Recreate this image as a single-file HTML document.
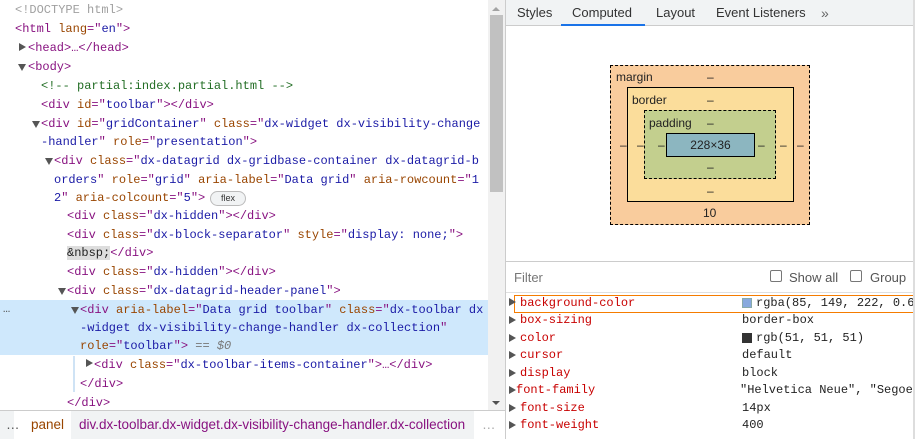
<!DOCTYPE html>
<html><head><style>
*{margin:0;padding:0;box-sizing:border-box}
body{width:915px;height:439px;overflow:hidden;background:#fff;position:relative;font-family:"Liberation Sans",sans-serif}
.mono{font-family:"Liberation Mono",monospace;font-size:12px}
.l{position:absolute;white-space:pre;line-height:19px;height:19px}
.t{color:#881280}.a{color:#994500}.v{color:#1a1aa6}.c{color:#236e25}.g{color:#a0a0a0}
.tri{position:absolute;width:0;height:0;border-left:4px solid transparent;border-right:4px solid transparent;border-top:7px solid #555}
.trr{position:absolute;width:0;height:0;border-top:4px solid transparent;border-bottom:4px solid transparent;border-left:7px solid #555}
.tab{position:absolute;top:0;height:26px;line-height:26px;font-size:13px;color:#333}
.prop{position:absolute;left:520px;font-family:"Liberation Mono",monospace;font-size:12px;color:#c80000;line-height:17px}
.val{position:absolute;left:742px;font-family:"Liberation Mono",monospace;font-size:12px;color:#222;line-height:17px;white-space:pre}
.dash{position:absolute;font-size:12px;color:#222}
</style></head><body>
<div style="position:absolute;left:0;top:300px;width:488px;height:55px;background:#cfe8fc"></div>
<div style="position:absolute;left:73px;top:356px;width:2px;height:36px;background:#cfe3f5"></div>
<div class="mono">
<div class="l g" style="left:15px;top:1px">&lt;!DOCTYPE html&gt;</div>
<div class="l" style="left:15px;top:20px"><span class="t">&lt;html </span><span class="a">lang</span><span class="t">="</span><span class="v">en</span><span class="t">"&gt;</span></div>
<div class="trr" style="left:19px;top:43px"></div>
<div class="l t" style="left:28px;top:39px">&lt;head&gt;…&lt;/head&gt;</div>
<div class="tri" style="left:18px;top:64px"></div>
<div class="l t" style="left:28px;top:58px">&lt;body&gt;</div>
<div class="l c" style="left:41px;top:77px">&lt;!-- partial:index.partial.html --&gt;</div>
<div class="l" style="left:41px;top:96px"><span class="t">&lt;div </span><span class="a">id</span><span class="t">="</span><span class="v">toolbar</span><span class="t">"&gt;&lt;/div&gt;</span></div>
<div class="tri" style="left:32px;top:121px"></div>
<div class="l" style="left:41px;top:115px"><span class="t">&lt;div </span><span class="a">id</span><span class="t">="</span><span class="v">gridContainer</span><span class="t">" </span><span class="a">class</span><span class="t">="</span><span class="v">dx-widget dx-visibility-change</span></div>
<div class="l" style="left:41px;top:133px"><span class="v">-handler</span><span class="t">" </span><span class="a">role</span><span class="t">="</span><span class="v">presentation</span><span class="t">"&gt;</span></div>
<div class="tri" style="left:45px;top:158px"></div>
<div class="l" style="left:54px;top:152px"><span class="t">&lt;div </span><span class="a">class</span><span class="t">="</span><span class="v">dx-datagrid dx-gridbase-container dx-datagrid-b</span></div>
<div class="l" style="left:54px;top:171px"><span class="v">orders</span><span class="t">" </span><span class="a">role</span><span class="t">="</span><span class="v">grid</span><span class="t">" </span><span class="a">aria-label</span><span class="t">="</span><span class="v">Data grid</span><span class="t">" </span><span class="a">aria-rowcount</span><span class="t">="</span><span class="v">1</span></div>
<div class="l" style="left:54px;top:189px"><span class="v">2</span><span class="t">" </span><span class="a">aria-colcount</span><span class="t">="</span><span class="v">5</span><span class="t">"&gt;</span></div>
<div style="position:absolute;left:210px;top:191px;width:36px;height:15px;border:1px solid #bbb;border-radius:8px;background:#f1f3f4;font-family:'Liberation Sans',sans-serif;font-size:9px;color:#333;text-align:center;line-height:13px">flex</div>
<div class="l" style="left:67px;top:207px"><span class="t">&lt;div </span><span class="a">class</span><span class="t">="</span><span class="v">dx-hidden</span><span class="t">"&gt;&lt;/div&gt;</span></div>
<div class="l" style="left:67px;top:226px"><span class="t">&lt;div </span><span class="a">class</span><span class="t">="</span><span class="v">dx-block-separator</span><span class="t">" </span><span class="a">style</span><span class="t">="</span><span class="v">display: none;</span><span class="t">"&gt;</span></div>
<div class="l" style="left:67px;top:244px"><span style="background:#ddd;color:#222">&amp;nbsp;</span><span class="t">&lt;/div&gt;</span></div>
<div class="l" style="left:67px;top:263px"><span class="t">&lt;div </span><span class="a">class</span><span class="t">="</span><span class="v">dx-hidden</span><span class="t">"&gt;&lt;/div&gt;</span></div>
<div class="tri" style="left:58px;top:288px"></div>
<div class="l" style="left:67px;top:282px"><span class="t">&lt;div </span><span class="a">class</span><span class="t">="</span><span class="v">dx-datagrid-header-panel</span><span class="t">"&gt;</span></div>
<div class="l" style="left:3px;top:300px;color:#555">…</div>
<div class="tri" style="left:71px;top:307px"></div>
<div class="l" style="left:80px;top:301px"><span class="t">&lt;div </span><span class="a">aria-label</span><span class="t">="</span><span class="v">Data grid toolbar</span><span class="t">" </span><span class="a">class</span><span class="t">="</span><span class="v">dx-toolbar dx</span></div>
<div class="l" style="left:80px;top:319px"><span class="v">-widget dx-visibility-change-handler dx-collection</span><span class="t">"</span></div>
<div class="l" style="left:80px;top:337px"><span class="a">role</span><span class="t">="</span><span class="v">toolbar</span><span class="t">"&gt;</span><span style="color:#777;font-style:italic"> == $0</span></div>
<div class="trr" style="left:86px;top:359px"></div>
<div class="l" style="left:94px;top:356px"><span class="t">&lt;div </span><span class="a">class</span><span class="t">="</span><span class="v">dx-toolbar-items-container</span><span class="t">"&gt;…&lt;/div&gt;</span></div>
<div class="l t" style="left:80px;top:375px">&lt;/div&gt;</div>
<div class="l t" style="left:67px;top:394px">&lt;/div&gt;</div>
</div>
<!-- scrollbar -->
<div style="position:absolute;left:488px;top:0;width:17px;height:411px;background:#f1f1f1"></div>
<div style="position:absolute;left:490px;top:15px;width:13px;height:177px;background:#c1c1c1"></div>
<div style="position:absolute;left:492px;top:7px;border-left:4px solid transparent;border-right:4px solid transparent;border-bottom:4px solid #a3a3a3"></div>
<div style="position:absolute;left:492px;top:401px;border-left:4px solid transparent;border-right:4px solid transparent;border-top:4px solid #505050"></div>
<!-- bottom bar -->
<div style="position:absolute;left:0;top:410px;width:505px;height:29px;background:#f1f3f4;border-top:1px solid #ccc;font-size:13.5px;line-height:28px">
<div style="position:absolute;left:14px;top:0;width:57px;height:28px;background:#fff"></div>
<div style="position:absolute;left:474px;top:0;width:31px;height:28px;background:#fff"></div>
<span style="position:absolute;left:6px;color:#555">…</span>
<span style="position:absolute;left:31px;color:#994500">panel</span>
<span style="position:absolute;left:79px;color:#881280">div.dx-toolbar.dx-widget.dx-visibility-change-handler.dx-collection</span>
<span style="position:absolute;left:482px;color:#aaa">…</span>
</div>
<!-- divider -->
<div style="position:absolute;left:505px;top:0;width:1px;height:439px;background:#ccc"></div>
<!-- right tabs -->
<div style="position:absolute;left:506px;top:0;width:409px;height:26px;background:#f1f3f4;border-bottom:1px solid #ccc"></div>
<div class="tab" style="left:517px">Styles</div>
<div class="tab" style="left:572px">Computed</div>
<div style="position:absolute;left:561px;top:24px;width:84px;height:2px;background:#1a73e8"></div>
<div class="tab" style="left:656px">Layout</div>
<div class="tab" style="left:716px">Event Listeners</div>
<div class="tab" style="left:821px;font-size:14px;color:#666">»</div>
<!-- box model -->
<div style="position:absolute;left:610px;top:65px;width:200px;height:160px;background:#f9cc9d;border:1px dashed #000"></div>
<div style="position:absolute;left:627px;top:87px;width:167px;height:115px;background:#fbdd9b;border:1px solid #000"></div>
<div style="position:absolute;left:644px;top:110px;width:132px;height:69px;background:#c3cf8e;border:1px dashed #000"></div>
<div style="position:absolute;left:666px;top:133px;width:89px;height:24px;background:#8cb6c0;border:1px solid #000;font-size:12px;text-align:center;line-height:22px;color:#222">228×36</div>
<div class="dash" style="left:616px;top:70px">margin</div>
<div class="dash" style="left:632px;top:93px">border</div>
<div class="dash" style="left:649px;top:116px">padding</div>
<div class="dash" style="left:707px;top:70px">–</div>
<div class="dash" style="left:707px;top:93px">–</div>
<div class="dash" style="left:707px;top:116px">–</div>
<div class="dash" style="left:707px;top:160px">–</div>
<div class="dash" style="left:707px;top:184px">–</div>
<div class="dash" style="left:703px;top:206px">10</div>
<div class="dash" style="left:620px;top:138px">–</div>
<div class="dash" style="left:637px;top:138px">–</div>
<div class="dash" style="left:658px;top:138px">–</div>
<div class="dash" style="left:758px;top:138px">–</div>
<div class="dash" style="left:780px;top:138px">–</div>
<div class="dash" style="left:797px;top:138px">–</div>
<!-- filter -->
<div style="position:absolute;left:506px;top:261px;width:409px;height:1px;background:#ccc"></div>
<div style="position:absolute;left:506px;top:292px;width:409px;height:1px;background:#e0e0e0"></div>
<div style="position:absolute;left:514px;top:270px;font-size:13px;color:#777">Filter</div>
<div style="position:absolute;left:770px;top:270px;width:12px;height:12px;border:1px solid #777;border-radius:2px"></div>
<div style="position:absolute;left:789px;top:270px;font-size:13px;color:#555">Show all</div>
<div style="position:absolute;left:850px;top:270px;width:12px;height:12px;border:1px solid #777;border-radius:2px"></div>
<div style="position:absolute;left:870px;top:270px;font-size:13px;color:#555">Group</div>
<!-- props -->
<div style="position:absolute;left:514px;top:295px;width:401px;height:18px;border:1px solid #f57c00;border-right:none"></div>
<div class="trr" style="left:509px;top:298px"></div><div class="prop" style="top:295px">background-color</div>
<div style="position:absolute;left:742px;top:298px;width:10px;height:10px;background:#87a9de;border:1px solid #8aa"></div><div class="val" style="left:756px;top:295px">rgba(85, 149, 222, 0.6</div>
<div class="trr" style="left:509px;top:316px"></div><div class="prop" style="top:312px">box-sizing</div><div class="val" style="top:312px">border-box</div>
<div class="trr" style="left:509px;top:334px"></div><div class="prop" style="top:330px">color</div>
<div style="position:absolute;left:742px;top:333px;width:10px;height:10px;background:#333"></div><div class="val" style="left:756px;top:330px">rgb(51, 51, 51)</div>
<div class="trr" style="left:509px;top:351px"></div><div class="prop" style="top:347px">cursor</div><div class="val" style="top:347px">default</div>
<div class="trr" style="left:509px;top:369px"></div><div class="prop" style="top:365px">display</div><div class="val" style="top:365px">block</div>
<div class="trr" style="left:509px;top:386px"></div><div class="prop" style="top:382px;left:516px">font-family</div><div class="val" style="top:382px;left:740px">"Helvetica Neue", "Segoe</div>
<div class="trr" style="left:509px;top:404px"></div><div class="prop" style="top:400px">font-size</div><div class="val" style="top:400px">14px</div>
<div class="trr" style="left:509px;top:421px"></div><div class="prop" style="top:417px">font-weight</div><div class="val" style="top:417px">400</div>
<div style="position:absolute;left:913px;top:0;width:2px;height:439px;background:#ddd"></div>
</body></html>
